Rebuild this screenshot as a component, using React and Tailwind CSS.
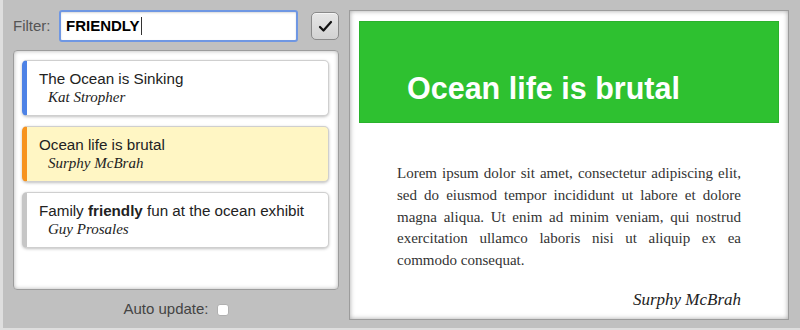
import React from "react";

const sans = { fontFamily: '"Liberation Sans", Arial, Helvetica, sans-serif' };
const serif = { fontFamily: '"Liberation Serif", "Times New Roman", serif' };

function Card({ color, selected, title, author }) {
  return (
    <div
      className={`rounded-[5px] border border-[#cfcfcf] border-l-[5px] ${color} ${selected ? "bg-[#fff6c4]" : "bg-white"} shadow-[0_1px_3px_rgba(0,0,0,0.25)] pl-[12px] pt-[8px] pb-[8px] h-[56px]`}
    >
      <div className="text-[15.2px] leading-[19px] text-[#222]" style={sans}>{title}</div>
      <div className="text-[15px] leading-[19px] italic text-[#222] pl-[9px]" style={serif}>{author}</div>
    </div>
  );
}

export default function App() {
  return (
    <div className="w-[800px] h-[330px] bg-[#c0c0c0] border-l-[3px] border-b-[2px] border-[#dedede] flex pl-[10px] pt-[10px] gap-[10px] overflow-hidden" style={sans}>
      <div className="w-[326px] flex flex-col">
        <div className="h-[32px] flex items-center">
          <span className="text-[15px] text-[#555] w-[46px]">Filter:</span>
          <div className="w-[239px] h-[32px] border-2 border-[#6f97e3] rounded-[3px] bg-white flex items-center pl-[5px] shadow-[inset_0_1px_2px_rgba(0,0,0,0.15)]">
            <span className="text-[15px] font-bold text-black">FRIENDLY</span>
            <span className="w-px h-[18px] bg-[#333] ml-[1px]"></span>
          </div>
          <div className="ml-[13px] w-[28px] h-[28px] rounded-[5px] border border-[#8a8a8a] bg-gradient-to-b from-[#e6e6e6] to-[#d2d2d2] flex items-center justify-center shadow-[inset_0_1px_0_rgba(255,255,255,0.6)]">
            <svg width="15" height="13" viewBox="0 0 15 13">
              <path d="M2 7 L5.5 10.5 L13 2" fill="none" stroke="#111" strokeWidth="2.2" strokeLinecap="round" strokeLinejoin="round" />
            </svg>
          </div>
        </div>
        <div className="mt-[8px] h-[240px] bg-white rounded-[4px] border border-[#9c9c9c] shadow-[inset_0_0_4px_rgba(0,0,0,0.3)] pl-[8px] pr-[9px] pt-[9px] flex flex-col gap-[10px]">
          <Card color="border-l-[#4d82e6]" title="The Ocean is Sinking" author="Kat Stropher" />
          <Card color="border-l-[#f7931e]" selected title="Ocean life is brutal" author="Surphy McBrah" />
          <Card
            color="border-l-[#c6c6c6]"
            title={<>Family <b>friendly</b> fun at the ocean exhibit</>}
            author="Guy Prosales"
          />
        </div>
        <div className="h-[38px] flex items-center justify-center gap-[8px]">
          <span className="text-[15px] text-[#444]">Auto update:</span>
          <span className="w-[12px] h-[12px] bg-white rounded-[3px] border border-[#b0b0b0] mt-[1px]"></span>
        </div>
      </div>
      <div className="w-[440px] h-[310px] bg-white border border-[#9c9c9c] shadow-[inset_0_0_5px_rgba(0,0,0,0.35)] pt-[10px] px-[9px]">
        <div className="h-[102px] bg-[#2ec130] border border-[#2ab22c] flex items-end pl-[47px] pb-[17px]">
          <h1 className="text-[30.5px] leading-[34px] font-bold text-white">Ocean life is brutal</h1>
        </div>
        <div className="px-[38px] pt-[40px]">
          <p className="text-[15px] leading-[21.8px] text-[#333] text-justify" style={serif}>
            Lorem ipsum dolor sit amet, consectetur adipiscing elit, sed do eiusmod tempor incididunt ut labore et dolore magna aliqua. Ut enim ad minim veniam, qui nostrud exercitation ullamco laboris nisi ut aliquip ex ea commodo consequat.
          </p>
          <div className="text-right italic text-[17px] text-[#222] mt-[15px]" style={serif}>Surphy McBrah</div>
        </div>
      </div>
    </div>
  );
}
